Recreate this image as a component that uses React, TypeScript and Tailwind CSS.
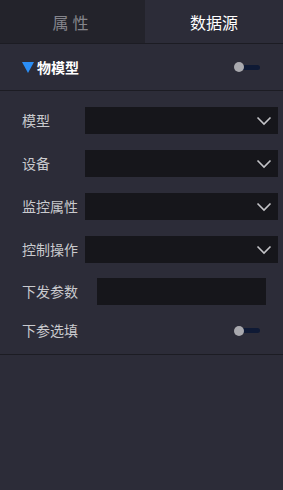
import React from "react";

const font = { fontFamily: '"Noto Sans CJK SC", "Noto Sans", sans-serif' };

const Chevron = () => (
  <svg width="16" height="10" viewBox="0 0 16 10" className="shrink-0">
    <path d="M1.5 1.5 L8 8 L14.5 1.5" fill="none" stroke="#c4c4c8" strokeWidth="1.6" />
  </svg>
);

const Toggle = () => (
  <div className="relative w-[26px] h-[12px] flex items-center">
    <div className="ml-[4px] h-[5px] w-[22px] rounded-full bg-[#0f1a35]" />
    <div className="absolute left-0 top-[1px] h-[10px] w-[10px] rounded-full bg-[#a9a9ae]" />
  </div>
);

const SelectRow = ({ label }: { label: string }) => (
  <div className="flex items-center h-[27px] mb-[16px]">
    <span className="w-[63px] text-[14px] text-[#c9cace] whitespace-nowrap">{label}</span>
    <div className="flex-1 h-[27px] bg-[#16161b] flex items-center justify-end pr-[6px]">
      <Chevron />
    </div>
  </div>
);

export default function App() {
  return (
    <div className="w-[283px] h-[490px] bg-[#2c2c38] flex flex-col" style={font}>
      {/* tabs */}
      <div className="flex h-[44px] border-b border-[#1c1c23]">
        <div className="w-[145px] bg-[#23232b] flex items-center justify-center text-[16px] text-[#85858c] tracking-[4px]">
          属性
        </div>
        <div className="flex-1 flex items-center justify-center text-[16px] text-white">数据源</div>
      </div>

      {/* section header */}
      <div className="h-[47px] flex items-center justify-between pl-[22px] pr-[23px] border-b border-[#1c1c23]">
        <div className="flex items-center gap-[3px]">
          <svg width="12" height="11" viewBox="0 0 12 11">
            <path d="M0 0 H12 L6 11 Z" fill="#2b8ef5" />
          </svg>
          <span className="text-[14px] font-bold text-white">物模型</span>
        </div>
        <Toggle />
      </div>

      {/* form */}
      <div className="pl-[22px] pr-[5px] pt-[16px] pb-[10px] border-b border-[#1c1c23]">
        <SelectRow label="模型" />
        <SelectRow label="设备" />
        <SelectRow label="监控属性" />
        <SelectRow label="控制操作" />
        <div className="flex items-center h-[27px] mt-[-1px] mb-[12px] pr-[12px]">
          <span className="w-[75px] text-[14px] text-[#c9cace]">下发参数</span>
          <div className="flex-1 h-[27px] bg-[#16161b]" />
        </div>
        <div className="flex items-center justify-between h-[27px] pr-[18px]">
          <span className="text-[14px] text-[#c9cace]">下参选填</span>
          <Toggle />
        </div>
      </div>
    </div>
  );
}
